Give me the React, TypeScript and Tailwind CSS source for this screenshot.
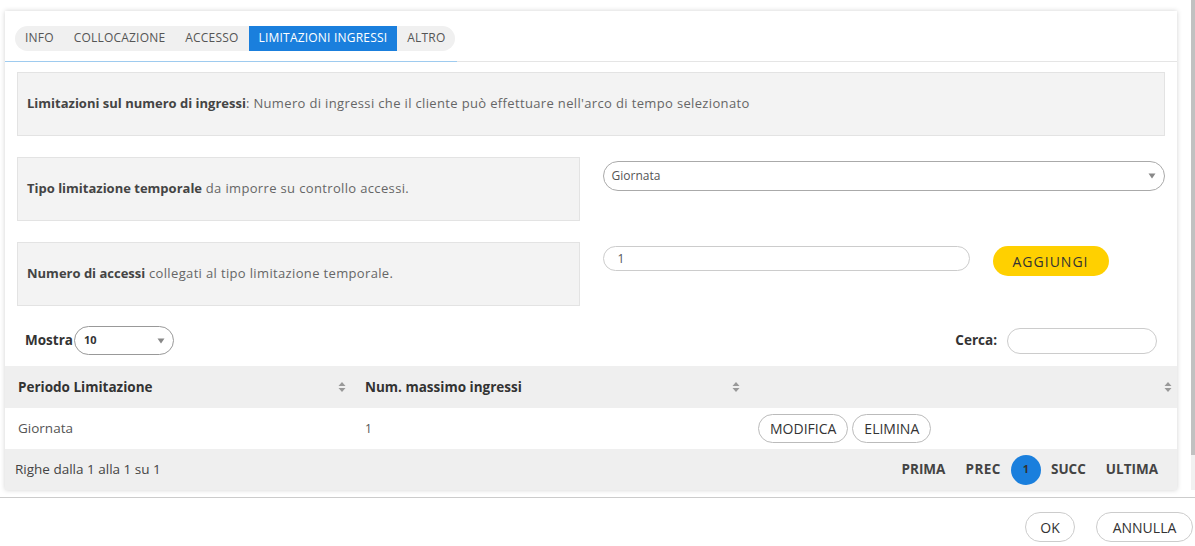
import React from "react";

const SortIcon = () => (
  <svg width="8" height="12" viewBox="0 0 8 12" className="shrink-0">
    <path d="M4 1 L7.5 5 L0.5 5 Z" fill="#999" />
    <path d="M4 11 L7.5 7 L0.5 7 Z" fill="#999" />
  </svg>
);

const Caret = () => (
  <svg width="8" height="6" viewBox="0 0 8 6">
    <path d="M0.5 0.5 L7.5 0.5 L4 5.5 Z" fill="#888" />
  </svg>
);

export default function App() {
  const tabs = ["INFO", "COLLOCAZIONE", "ACCESSO", "LIMITAZIONI INGRESSI", "ALTRO"];
  return (
    <div className="w-[1195px] h-[546px] bg-white overflow-hidden flex flex-col" style={{ fontFamily: "'Open Sans', Lato, sans-serif" }}>
      <div className="flex h-[497px]">
        <div className="flex-1 pt-[11px] pl-[5px] pr-[14px]">
          <div className="bg-white shadow-[0_0_5px_rgba(0,0,0,0.18)] h-[479px] flex flex-col">
            {/* tabs */}
            <div className="pt-[13px] pl-[10px] h-[50px]">
              <div className="inline-flex h-[25px] bg-[#f0f0f0] rounded-full items-stretch text-[12px] tracking-[0.2px] text-[#555]">
                {tabs.map((t) => (
                  <div
                    key={t}
                    className={
                      t === "LIMITAZIONI INGRESSI"
                        ? "px-[10px] flex items-center bg-[#1a7fdd] text-white"
                        : "px-[10px] flex items-center"
                    }
                  >
                    {t}
                  </div>
                ))}
              </div>
            </div>
            <div className="flex h-[1px]">
              <div className="w-[452px] bg-[#9ecbef]" />
              <div className="flex-1 bg-[#e5e5e5]" />
            </div>
            <div className="px-[12px] pt-[10px]">
              <div className="h-[64px] bg-[#f3f3f3] border border-[#e3e3e3] flex items-center px-[9px] text-[13px] text-[#666] tracking-[0.35px]">
                <span className="font-bold text-[#444] tracking-normal">Limitazioni sul numero di ingressi</span>: Numero di ingressi che il cliente può effettuare nell'arco di tempo selezionato
              </div>
              <div className="grid grid-cols-2 gap-x-[23px] mt-[21px]">
                <div className="h-[64px] bg-[#f3f3f3] border border-[#e3e3e3] flex items-center px-[9px] text-[13px] text-[#666] tracking-[0.35px]">
                  <span>
                    <span className="font-bold text-[#444] tracking-normal">Tipo limitazione temporale</span> da imporre su controllo accessi.
                  </span>
                </div>
                <div className="pt-[4px]">
                  <div className="h-[30px] border border-[#aaa] rounded-full flex items-center justify-between pl-[8px] pr-[8px] text-[12px] text-[#555]">
                    <span>Giornata</span>
                    <Caret />
                  </div>
                </div>
              </div>
              <div className="grid grid-cols-2 gap-x-[23px] mt-[21px]">
                <div className="h-[64px] bg-[#f3f3f3] border border-[#e3e3e3] flex items-center px-[9px] text-[13px] text-[#666] tracking-[0.35px]">
                  <span>
                    <span className="font-bold text-[#444] tracking-normal">Numero di accessi</span> collegati al tipo limitazione temporale.
                  </span>
                </div>
                <div className="pt-[4px] flex items-start gap-[23px]">
                  <div className="w-[367px] h-[25px] border border-[#ccc] rounded-full flex items-center pl-[14px] text-[12px] text-[#555]">
                    1
                  </div>
                  <button className="w-[116px] h-[30px] bg-[#ffd000] rounded-full text-[14px] text-[#333] tracking-[1px]">
                    AGGIUNGI
                  </button>
                </div>
              </div>
            </div>
            {/* Mostra / Cerca */}
            <div className="flex items-center justify-between pl-[20px] pr-[20px] mt-[20px] h-[29px]">
              <div className="flex items-center gap-[1px]">
                <span className="text-[13.5px] font-bold text-[#333]">Mostra</span>
                <div className="w-[100px] h-[29px] border border-[#999] rounded-full flex items-center justify-between pl-[9px] pr-[8px] text-[11px] font-bold text-[#333]">
                  <span>10</span>
                  <Caret />
                </div>
              </div>
              <div className="flex items-center gap-[10px]">
                <span className="text-[13.5px] font-bold text-[#333]">Cerca:</span>
                <div className="w-[150px] h-[26px] border border-[#ccc] rounded-full" />
              </div>
            </div>
            {/* table */}
            <div className="mt-[11px] text-[13.5px]">
              <div className="grid grid-cols-[348px_394px_1fr] h-[42px] bg-[#efefef] font-bold text-[#333]">
                <div className="flex items-center justify-between pl-[13px] pr-[7px]">
                  <span>Periodo Limitazione</span>
                  <SortIcon />
                </div>
                <div className="flex items-center justify-between pl-[12px] pr-[7px]">
                  <span>Num. massimo ingressi</span>
                  <SortIcon />
                </div>
                <div className="flex items-center justify-end pr-[5px]">
                  <SortIcon />
                </div>
              </div>
              <div className="grid grid-cols-[348px_394px_1fr] h-[41px] bg-white text-[#555]">
                <div className="flex items-center pl-[13px]">Giornata</div>
                <div className="flex items-center pl-[12px] text-[12px]">1</div>
                <div className="flex items-center pl-[11px] gap-[4px]">
                  <button className="h-[29px] px-[11px] border border-[#bbb] rounded-full text-[14px] text-[#333]">MODIFICA</button>
                  <button className="h-[29px] px-[11px] border border-[#bbb] rounded-full text-[14px] text-[#333]">ELIMINA</button>
                </div>
              </div>
              <div className="h-[41px] bg-[#efefef] flex items-center justify-between pl-[10px] pr-[19px]">
                <span className="text-[#444]">Righe dalla 1 alla 1 su 1</span>
                <div className="flex items-center font-bold text-[#444] gap-[20px]">
                  <span>PRIMA</span>
                  <span className="tracking-[0.5px]">PREC</span>
                  <span className="w-[30px] h-[30px] rounded-full bg-[#1a7fdd] flex items-center justify-center text-[11px] text-[#333] mx-[-10px]">1</span>
                  <span>SUCC</span>
                  <span>ULTIMA</span>
                </div>
              </div>
            </div>
          </div>
        </div>
        <div className="w-[4px] flex flex-col">
          <div className="h-[455px] bg-[#c1c1c1]" />
          <div className="h-[35px] bg-[#f1f1f1]" />
        </div>
      </div>
      <div className="h-[1px] bg-[#ccc]" />
      <div className="flex justify-end items-center gap-[21px] pr-[2px] pt-[14px]">
        <button className="w-[50px] h-[30px] border border-[#ccc] rounded-full text-[14px] text-[#333]">OK</button>
        <button className="w-[97px] h-[30px] border border-[#ccc] rounded-full text-[14px] text-[#333]">ANNULLA</button>
      </div>
    </div>
  );
}
